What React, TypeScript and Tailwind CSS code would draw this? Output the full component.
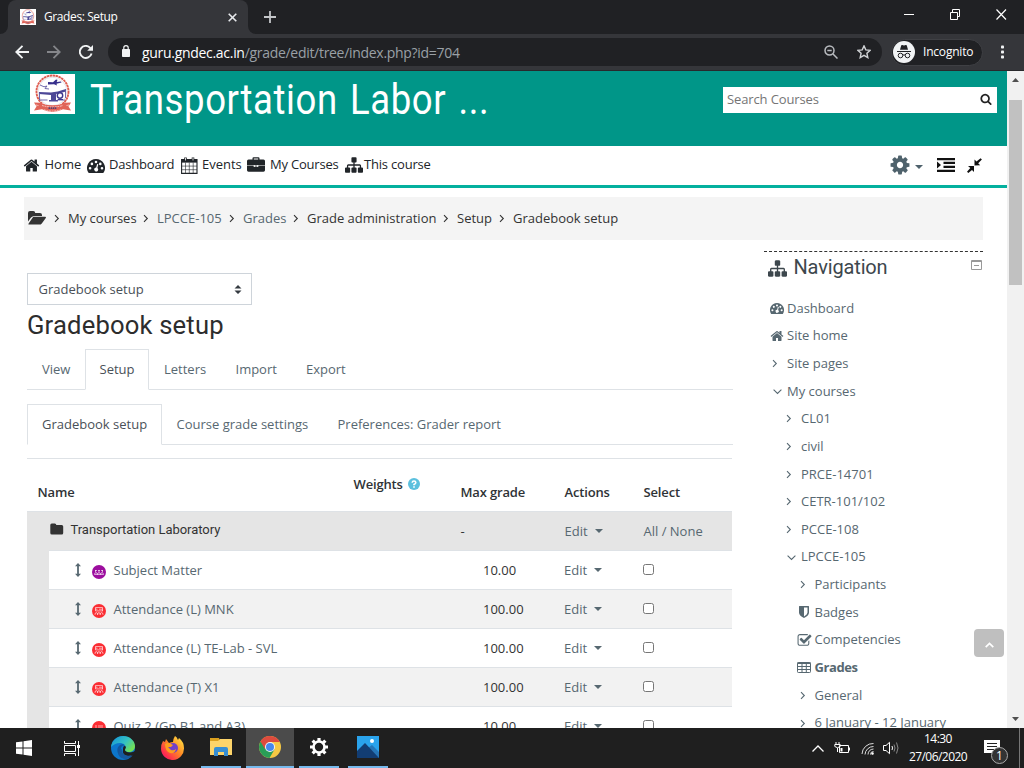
import React from "react";

type P = { c?: string };

const HOME = "M1472 992v480q0 26-19 45t-45 19h-384v-384h-256v384h-384q-26 0-45-19t-19-45v-480q0-1 .5-3t.5-3l575-474 575 474q1 2 1 6zm223-69l-62 74q-8 9-21 11h-3q-13 0-21-7l-692-577-692 577q-12 8-24 7-13-2-21-11l-62-74q-8-10-7-23.5t11-21.5l719-599q32-26 76-26t76 26l244 204v-195q0-14 9-23t23-9h192q14 0 23 9t9 23v408l219 182q10 8 11 21.5t-7 23.5z";
const SITEMAP = "M1792 1248v320q0 40-28 68t-68 28h-320q-40 0-68-28t-28-68v-320q0-40 28-68t68-28h96v-192h-512v192h96q40 0 68 28t28 68v320q0 40-28 68t-68 28h-320q-40 0-68-28t-28-68v-320q0-40 28-68t68-28h96v-192h-512v192h96q40 0 68 28t28 68v320q0 40-28 68t-68 28h-320q-40 0-68-28t-28-68v-320q0-40 28-68t68-28h96v-192q0-52 38-90t90-38h512v-192h-96q-40 0-68-28t-28-68v-320q0-40 28-68t68-28h320q40 0 68 28t28 68v320q0 40-28 68t-68 28h-96v192h512q52 0 90 38t38 90v192h96q40 0 68 28t28 68z";
const COG = "M1152 896q0-106-75-181t-181-75-181 75-75 181 75 181 181 75 181-75 75-181zm512-109v222q0 12-8 23t-20 13l-185 28q-19 54-39 91 35 50 107 138 10 12 10 25t-9 23q-27 37-99 108t-94 71q-12 0-26-9l-138-108q-44 23-91 38-16 136-29 186-7 28-36 28h-222q-14 0-24.5-8.5t-11.5-21.5l-28-184q-49-16-90-37l-141 107q-10 9-25 9-14 0-25-11-126-114-165-168-7-10-7-23 0-12 8-23 15-21 51-66.5t54-70.5q-27-50-41-99l-183-27q-13-2-21-12.5t-8-23.5v-222q0-12 8-23t19-13l186-28q14-46 39-92-40-57-107-138-10-12-10-24 0-10 9-23 26-36 98.5-107.5t94.5-71.5q13 0 26 10l138 107q44-23 91-38 16-136 29-186 7-28 36-28h222q14 0 24.5 8.5t11.5 21.5l28 184q49 16 90 37l142-107q9-9 24-9 13 0 25 10 129 119 165 170 7 8 7 22 0 12-8 23-15 21-51 66.5t-54 70.5q26 50 41 98l183 28q13 2 21 12.5t8 23.5z";
const CHECK = "M1472 930v318q0 119-84.5 203.5t-203.5 84.5h-832q-119 0-203.5-84.5t-84.5-203.5v-832q0-119 84.5-203.5t203.5-84.5h832q63 0 117 25 15 7 18 23 3 17-9 29l-49 49q-10 10-23 10-3 0-9-2-23-6-45-6h-832q-66 0-113 47t-47 113v832q0 66 47 113t113 47h832q66 0 113-47t47-113v-254q0-13 9-22l64-64q10-10 23-10 6 0 12 3 20 8 20 29zm231-489l-814 814q-24 24-57 24t-57-24l-430-430q-24-24-24-57t24-57l110-110q24-24 57-24t57 24l263 263 647-647q24-24 57-24t57 24l110 110q24 24 24 57t-24 57z";
const SEARCH = "M1216 832q0-185-131.5-316.5t-316.5-131.5-316.5 131.5-131.5 316.5 131.5 316.5 316.5 131.5 316.5-131.5 131.5-316.5zm512 832q0 52-38 90t-90 38q-54 0-90-38l-343-342q-179 124-399 124-143 0-273.5-55.5t-225-150-150-225-55.5-273.5 55.5-273.5 150-225 225-150 273.5-55.5 273.5 55.5 225 150 150 225 55.5 273.5q0 220-124 399l343 343q37 37 37 90z";

const Glyph = ({ d, c = "" }: { d: string; c?: string }) => (
  <svg viewBox="0 0 1792 1792" fill="currentColor" className={"shrink-0 " + c}><path d={d} /></svg>
);
const Gauge = ({ c = "" }: P) => (
  <svg viewBox="0 0 18 14" fill="currentColor" className={"shrink-0 " + c}>
    <path fillRule="evenodd" d="M9 0a9 9 0 0 1 7.700 13.600q-.2.4-.7.4H2q-.5 0-.7-.4A9 9 0 0 1 9 0zM3.100 8a1.300 1.300 0 1 0 0 2.600 1.300 1.300 0 0 0 0-2.600zM4.900 3.600a1.300 1.300 0 1 0 0 2.600 1.300 1.300 0 0 0 0-2.600zM9 1.700a1.300 1.300 0 1 0 0 2.600 1.300 1.300 0 0 0 0-2.600zM13.300 3.600a1.300 1.300 0 1 0 0 2.600 1.300 1.300 0 0 0 0-2.600zM15 8a1.300 1.300 0 1 0 0 2.600 1.300 1.300 0 0 0 0-2.600zM10.100 4.900 9.200 8.500a2 2 0 1 0 1.200.4L11.300 5.200z" />
  </svg>
);
const Calendar = ({ c = "" }: P) => (
  <svg viewBox="0 0 17 17" fill="none" stroke="currentColor" className={"shrink-0 " + c}>
    <path d="M.6 2.600H16v13.800H.6z" strokeWidth="1.100" />
    <path d="M.6 5.500H16M4.500 5.500v11M8.300 5.500v11M12.200 5.500v11M.6 9.100H16M.6 12.700H16" strokeWidth=".6" />
    <path d="M.6 3.800H16" strokeWidth="2.500" /><path d="M4.500.5v3.500M12 .5v3.500" strokeWidth="2.600" /><path d="M4.500 1v2.500M12 1v2.500" stroke="#fff" strokeWidth=".8" />
  </svg>
);
const Briefcase = ({ c = "" }: P) => (
  <svg viewBox="0 0 18 15" fill="currentColor" className={"shrink-0 " + c}>
    <path fillRule="evenodd" d="M5.500 2.500V1.200Q5.500.2 6.600.2h4.800q1.100 0 1.100 1v1.300h4q1.500 0 1.500 1.500v4H0V4q0-1.500 1.500-1.500zM6.800 2.500h4.400V1.400H6.800z" />
    <path d="M0 8.500h6.700v1.500h4.600V8.500H18v4.800q0 1.400-1.500 1.400h-15Q0 14.700 0 13.300z" /><path d="M7.800 8.600h2.400v.9H7.800z" />
  </svg>
);
const FolderOpen = ({ c = "" }: P) => (
  <svg viewBox="0 0 18 14" fill="currentColor" className={"shrink-0 " + c}>
    <path d="M0 10.800V2Q0 0 2 0h3.200q2 0 2 2H12q2 0 2 2v1H6.500Q4.300 5 3 6.600L0 10.500z" />
    <path d="M6.200 5.800h11q1.300.1.400 1.500l-3.800 5.100q-1 1.200-2.500 1.200H1Q-.1 13.500.8 12.300l3.400-5.100q.8-1.400 2-1.400z" />
  </svg>
);
const Chev = ({ c = "", dir = "r" }: P & { dir?: string }) => (
  <svg viewBox="0 0 9 9" fill="none" stroke="currentColor" strokeWidth="1.100" className={"shrink-0 " + c}>
    <path d={dir === "r" ? "M2 1.200 5.300 4.500 2 7.800" : "M.6 2.700 4.500 6.500 8.400 2.700"} />
  </svg>
);
const UpDown = () => (
  <svg viewBox="0 0 6 14" width="6" height="14" fill="currentColor" className="shrink-0"><path d="M3 0l3 3.200H3.900v7.600H6L3 14 0 10.800h2.100V3.200H0z" /></svg>
);
const Caret = ({ c = "" }: P) => <svg viewBox="0 0 8 4" width="8" height="4" fill="currentColor" className={"shrink-0 " + c}><path d="M0 0h8L4 4z" /></svg>;

const Emblem = ({ c = "" }: P) => (
  <svg viewBox="0 0 45 40" preserveAspectRatio="none" className={"shrink-0 bg-white " + c}>
    <circle cx="22.500" cy="17.500" r="16" fill="none" stroke="#df5c50" strokeWidth="1.900" strokeDasharray="2.500 .5" />
    <circle cx="22.500" cy="17.500" r="14.300" fill="none" stroke="#d5d0dc" strokeWidth=".6" />
    <path d="M9 18l12 .5q6-.5 15-3.500v2.500l-10 2.500v6h2v1.500h-9V26h2v-5l-12-1z" fill="#4d4897" />
    <path d="M18 8l5 .2 3-2.700 1.500.2-.8 2.300 4.300-.5.500 1-5 1.200.5 1.800-3-1.300-6 .2z" fill="#372f8c" />
    <path d="M10 11l4 1.800 3-.8-2 2.500 4 .5M9.500 19v7h8M35.500 16v8M27 26h8" fill="none" stroke="#625ba4" strokeWidth=".9" />
    <circle cx="30" cy="21.500" r="2.700" fill="#fff" stroke="#3d378f" strokeWidth="1.400" /><path d="M28 25.500h5" stroke="#3d378f" />
    <path d="M4 28.500l7 .3 2 1.500q9.500 2 19 0l2-1.500 7-.3-2.500 4 2.500 4-5-.8-3-.4q-10.500 5.500-21 0l-3 .4-5 .8 2.500-4z" fill="#e16458" />
    <path d="M6 31l3 .7M39 31l-3 .7M12 31.500q10.500 3 21 0M14 35.800q8 2.600 17 0" fill="none" stroke="#fbe0dd" strokeWidth=".8" strokeDasharray="1.800 .8" /><path d="M18.500 34.200h8" stroke="#57406f" strokeWidth="1.700" strokeDasharray="1.500 .6" />
  </svg>
);

const crumbs: [string, string][] = [["My courses", "w-[89px]"], ["LPCCE-105", "w-[86px] text-[#576871]"], ["Grades", "w-[64px] text-[#576871]"], ["Grade administration", "w-[150px]"], ["Setup", "w-[56px]"], ["Gradebook setup", "w-[120px]"]];

const items = [
  { n: "Subject Matter", g: "10.00", p: true },
  { n: "Attendance (L) MNK", g: "100.00" },
  { n: "Attendance (L) TE-Lab - SVL", g: "100.00" },
  { n: "Attendance (T) X1", g: "100.00" },
  { n: "Quiz 2 (Gp B1 and A3)", g: "10.00", quiz: true },
];

const ItemIcon = ({ p, quiz }: { p?: boolean; quiz?: boolean }) => (
  <svg viewBox="0 0 14 14" className="mt-[2px] size-[14px] shrink-0">
    <circle cx="7" cy="7" r="7" fill={p ? "#9c0e9e" : "#fb2d33"} />
    <g fill="none" stroke="#fff" strokeOpacity=".75" strokeWidth=".8">
      {p ? <path d="M2.500 9.500q.2-2 1.500-2t1.500 2q.2-2 1.500-2t1.500 2q.2-2 1.500-2t1.500 2M3 5.500h2m1 0h2m1 0h2M3.500 5v2m3.500-2v2m3.500-2v2M2.500 9.500h9" />
        : quiz ? <path d="M3 5h2M6 5h5M3 7h2M6 7h5M3 9h2M6 9h5" />
        : <path d="M3.500 3.500h7M3.500 5.200h2m1.500 0h3.500M3.500 6.900H11M3.500 3.500V7m7-3.500V7M3 10.800q0-2.300 1.300-2.300t1.300 2.300m0 0q0-2.300 1.300-2.300t1.300 2.300m0 0q0-2.300 1.400-2.300t1.400 2.300" />}
    </g>
  </svg>
);

const tree: { t: string; k: string; pad: string; b?: boolean }[] = [
  { t: "Dashboard", k: "gauge", pad: "pl-[6px]" },
  { t: "Site home", k: "home", pad: "pl-[6px]" },
  { t: "Site pages", k: "r", pad: "pl-[6px]" },
  { t: "My courses", k: "d", pad: "pl-[6px]" },
  { t: "CL01", k: "r", pad: "pl-5" },
  { t: "civil", k: "r", pad: "pl-5" },
  { t: "PRCE-14701", k: "r", pad: "pl-5" },
  { t: "CETR-101/102", k: "r", pad: "pl-5" },
  { t: "PCCE-108", k: "r", pad: "pl-5" },
  { t: "LPCCE-105", k: "d", pad: "pl-5" },
  { t: "Participants", k: "r", pad: "pl-[33.500px]" },
  { t: "Badges", k: "shield", pad: "pl-[33.500px]" },
  { t: "Competencies", k: "check", pad: "pl-[33.500px]" },
  { t: "Grades", k: "table", pad: "pl-[33.500px]", b: true },
  { t: "General", k: "r", pad: "pl-[33.500px]" },
  { t: "6 January - 12 January", k: "r", pad: "pl-[33.500px]" },
];

const TreeIcon = ({ k }: { k: string }) => {
  if (k === "gauge") return <Gauge c="h-[11px] w-[14px]" />;
  if (k === "home") return <Glyph d={HOME} c="size-[14px]" />;
  if (k === "check") return <Glyph d={CHECK} c="-ml-px size-[15px]" />;
  if (k === "shield") return <svg viewBox="0 0 10 12" className="ml-[1.500px] h-[12px] w-[10px]" fill="currentColor"><path fillRule="evenodd" d="M0 .5Q0 0 .5 0h9q.5 0 .5.500v6Q10 9.800 5 12 0 9.800 0 6.500zM5 1.500v8.900Q8.500 8.500 8.500 6.500v-5z" /></svg>;
  if (k === "table") return <svg viewBox="0 0 14 11" className="-ml-[.5px] h-[11px] w-[14px]" fill="none" stroke="currentColor"><rect x=".5" y=".5" width="13" height="10" rx=".8" /><path d="M.5 1.200h13" strokeWidth="1.600" /><path d="M.5 4.500h13M.5 7.500h13M5 1v9.500M9.300 1v9.500" /></svg>;
  return <Chev dir={k} c={k === "r" ? "ml-[1px] size-[9px]" : "ml-[3px] size-[9px]"} />;
};

function BrowserChrome() {
  return (
    <header className="h-[71px] bg-[#202124] font-['Open_Sans',sans-serif] text-white">
      <div className="flex h-[34px]">
        <div className="flex h-[34px] w-[8px] items-end bg-[#35363a]"><div className="h-full w-full rounded-br-[8px] bg-[#202124]" /></div>
        <div className="flex w-[240px] items-center rounded-t-[8px] bg-[#35363a] pl-3">
          <Emblem c="size-4" />
          <span className="ml-2 w-[184px] text-[12px] tracking-[-0.400px]">Grades: Setup</span>
          <svg width="9" height="9" viewBox="0 0 9 9" stroke="#e8eaed" strokeWidth="1.600"><path d="M.7.7l7.600 7.600M8.300.7.7 8.300" /></svg>
        </div>
        <div className="w-[8px] bg-[#35363a]"><div className="h-full w-full rounded-bl-[8px] bg-[#202124]" /></div>
        <svg className="mt-[11px] ml-[8px]" width="12" height="12" stroke="#c4c6c9" strokeWidth="1.800"><path d="M6 0v12M0 6h12" /></svg>
        <svg className="mt-[9px] ml-auto mr-[17px]" width="103" height="11" fill="none" stroke="#fff"><path d="M0 5.500h10" /><path d="M46.500 3.500h7v7h-7zM48.500 3.500v-3h7v7h-2" /><path d="M92.500.500l9.500 10M102 .5l-9.500 10" strokeWidth="1.200" /></svg>
      </div>
      <div className="flex h-[37px] items-center border-b border-[#28292c] bg-[#35363a]">
        <svg className="ml-[15px] shrink-0" width="14" height="14" fill="none" stroke="#f1f3f4" strokeWidth="1.900"><path d="M14 7H1.500M7.500.900 1.300 7l6.200 6.100" /></svg>
        <svg className="ml-[18px] shrink-0" width="14" height="14" fill="none" stroke="#85868a" strokeWidth="1.800"><path d="M0 7h12.500M6.500.900 12.700 7l-6.200 6.100" /></svg>
        <svg className="ml-[18px] shrink-0" width="14" height="14" fill="none" stroke="#f1f3f4" strokeWidth="1.900"><path d="M12.600 8.500A6 6 0 1 1 11.200 2.800L12.800 4.400" /><path d="M14 0v5.800H8.200z" fill="#f1f3f4" stroke="none" /></svg>
        <div className="ml-[15px] flex h-7 w-[774px] items-center rounded-full bg-[#202124]">
          <svg className="ml-[14px] -mt-[2px] shrink-0" width="8" height="12" viewBox="0 0 8 12"><rect y="4" width="8" height="8" rx=".8" fill="#f1f3f4" /><path d="M1.800 5V2.800a2.200 2.200 0 0 1 4.400 0V5" fill="none" stroke="#f1f3f4" strokeWidth="1.200" /></svg>
          <span className="ml-[12px] text-[14px] tracking-[-0.300px] whitespace-nowrap text-[#9aa0a6]"><span className="text-white">guru.gndec.ac.in</span>/grade/edit/tree/index.php?id=704</span>
          <svg className="ml-auto mr-[19px]" width="14" height="14" fill="none" stroke="#b9bcc0" strokeWidth="1.500"><circle cx="5.500" cy="5.500" r="4.500" /><path d="M9 9l4.500 4.500M3.300 5.500h4.400" /></svg>
          <svg className="mr-[11px]" width="14" height="14" viewBox="0 0 14 14" fill="none" stroke="#d0d2d5" strokeWidth="1.400"><path d="M7 .9l1.800 4 4.300.4-3.200 2.900.9 4.400L7 10.300l-3.800 2.300.9-4.400L.9 5.300l4.300-.4z" /></svg>
        </div>
        <div className="ml-[9px] flex h-[27px] w-[92px] items-center rounded-full border border-[#3f4044] bg-[#202124] pl-px">
          <svg width="22" height="22" viewBox="0 0 22 22" className="shrink-0"><circle cx="11" cy="11" r="11" fill="#f1f3f4" /><g fill="none" stroke="#202124"><path d="M4 10.500h14" /><circle cx="7.500" cy="14.500" r="2.300" /><circle cx="14.500" cy="14.500" r="2.300" /><path d="M9.800 14.200q1.200-.8 2.400 0" /></g><path d="M7 8.800 8.200 4.500q.3-.7 1-.4l1.800.5 1.800-.5q.7-.3 1 .4L15 8.800z" fill="#202124" /></svg>
          <span className="ml-[8px] text-[12px] tracking-[-0.200px]">Incognito</span>
        </div>
        <svg className="ml-[18px]" width="4" height="14" fill="#f1f3f4"><rect y=".5" width="3" height="3" rx=".8" /><rect y="5.500" width="3" height="3" rx=".8" /><rect y="10.500" width="3" height="3" rx=".8" /></svg>
      </div>
    </header>
  );
}

function Taskbar() {
  return (
    <footer className="flex h-10 items-stretch bg-[#1f1f1f] font-['Open_Sans',sans-serif] text-white">
      <div className="flex w-[48px] items-center justify-center"><svg width="16" height="16" fill="#fff"><path d="M0 2.300 6.500 1.400v6.100H0zM7.500 1.200 16 0v7.500H7.500zM0 8.500h6.500v6.100L0 13.700zM7.500 8.500H16V16l-8.500-1.200z" /></svg></div>
      <div className="flex w-[49px] items-center justify-center"><svg width="17" height="15" fill="none" stroke="#fff"><path d="M.500 0v2.500h11V0M.500 15v-2.500h11V15M.500 4.500h11v6H.500zM14.500 0v15" /><path d="M13 4h3v3h-3z" fill="#fff" stroke="none" /></svg></div>
      <div className="flex w-[52px] items-center justify-center">
        <svg width="24" height="24" viewBox="0 0 24 24"><defs><linearGradient id="eg" x1="0" x2="1" y1="0" y2=".6"><stop stopColor="#1292d8" /><stop offset=".6" stopColor="#34c1c3" /><stop offset="1" stopColor="#72e055" /></linearGradient></defs><circle cx="12" cy="12" r="12" fill="#0c76cb" /><path d="M0 11C1 4 6 0 12 0c7 0 12 5 12 10 0 4-3 6-6 6-3 0-5-1-4-3 2-4-2-6-5-6-4 0-7 2-9 4z" fill="url(#eg)" /><path d="M9 9c-3 2-4 7 0 11s9 3 12 0c-7 3-13-1-11-8 .5-2 2-3 4-2-1-2-3-2-5-1z" fill="#12569d" /><path d="M14 10c2 1 0 3 0 4 0 2 4 3 8 2l2-1v3l-3 2c-5 1-10-1-9-6 0-2 0-4 2-4z" fill="#1f1f1f" /><path d="M11 13c-1 5 4 8 10 6-3 4-8 5-12 2-3-3-1-7 2-8z" fill="#17599f" /></svg>
      </div>
      <div className="flex w-[48px] items-center justify-center">
        <svg width="24" height="24" viewBox="0 0 24 24"><defs><linearGradient id="fg" x1="1" y1="0" x2="0" y2="1"><stop stopColor="#fff34a" /><stop offset=".45" stopColor="#ff8a24" /><stop offset=".8" stopColor="#ff294f" /><stop offset="1" stopColor="#e51d9c" /></linearGradient></defs><path d="M2 5l2 1 1-3 3 4q2-1 4-1 0-3 2-6 2 1 3 4l1-2q5 4 5 10a11.500 11.500 0 0 1-23 1Q0 8 2 5z" fill="url(#fg)" /><circle cx="12" cy="12" r="5" fill="#7341c9" /><path d="M4 8q3-2 6 0l2 1-2 2-3 0 3 3q3 1 5-1-1 5-6 4-5-2-5-9z" fill="#ff9d1e" /></svg>
      </div>
      <div className="ml-1 flex w-10 items-center justify-center border-b-2 border-[#76b9ed]"><svg width="22" height="20" viewBox="0 0 22 20"><path d="M0 1h9l1 3H0z" fill="#dca11f" /><path d="M0 4h8l2-2h12v16H0z" fill="#fdd46a" /><path d="M4 19v-7q0-2 2-2h10q2 0 2 2v7h-4v-4H8v4z" fill="#378ed3" /></svg></div>
      <div className="ml-[5px] flex w-12 items-center justify-center border-b-2 border-[#76b9ed] bg-[#4b4b4b]"><svg width="22" height="22" viewBox="0 0 22 22"><circle cx="11" cy="11" r="11" fill="#f6c844" /><path d="M11 11 1.500 5.500A11 11 0 0 0 10.500 22l5-8.500z" fill="#299e57" /><path d="M11 6h9.800A11 11 0 0 0 1.500 5.500L6 13z" fill="#dd4b3e" /><circle cx="11" cy="11" r="5" fill="#f4f4f4" /><circle cx="11" cy="11" r="4" fill="#4688ee" /></svg></div>
      <div className="ml-[5px] flex w-10 items-center justify-center border-b-2 border-[#76b9ed]"><svg width="20" height="20" viewBox="-10 -10 20 20" fill="none" stroke="#fff"><circle r="5.500" strokeWidth="2.600" /><path d="M0-6v-3M0 6v3M6 0h3M-6 0h-3M4.300 4.300l2.100 2.100M-4.300-4.300l-2.100-2.100M4.300-4.300l2.100-2.100M-4.300 4.300l-2.100 2.100" strokeWidth="3.200" /></svg></div>
      <div className="ml-[9px] flex w-10 items-center justify-center border-b-2 border-[#76b9ed]"><svg width="22" height="22"><rect width="22" height="22" fill="#2aa3ec" /><path d="M11 12l4-3 7 7v6H11z" fill="#2676b8" /><path d="M0 15l8-8 14 15H0z" fill="#123d73" /><circle cx="15" cy="5" r="2" fill="#fff" /></svg></div>
      <div className="ml-auto flex items-center">
        <svg width="12" height="7" fill="none" stroke="#fff" strokeWidth="1.300"><path d="M.500 6.500 6 1l5.500 5.500" /></svg>
        <svg className="ml-[10px]" width="17" height="12" fill="none" stroke="#fff"><path d="M2 0v2M5 0v2M.8 2.500h5.400v2q-2.700 2.500-5.400 0zM3.500 6v4" /><path d="M5.500 3.500h9v7h-9zM15.500 5.500v3" /><path d="M6.500 6h2v3.500h-2z" fill="#fff" stroke="none" /></svg>
        <svg className="ml-[10px]" width="13" height="13" fill="none" stroke="#ddd"><path d="M1 12A11 11 0 0 1 12.500 1.500M4 12.500A8.500 8.500 0 0 1 12.500 4.500M7 12.500a6 6 0 0 1 5.500-5.500M9.500 12.500a3 3 0 0 1 3-3" /><circle cx="11.500" cy="11.500" r="1" fill="#fff" /></svg>
        <svg className="ml-[9px]" width="17" height="14" fill="none" stroke="#fff"><path d="M.500 4.500H3L6.500 1.300v11.400L3 9.500H.500zM9 5q1 2 0 4" /><path d="M11 3.500q2 3.500 0 7M13.500 1.500q3 5.500 0 11" stroke="#888" /></svg>
        <div className="ml-[6px] flex w-[64px] flex-col items-center text-[12px] leading-[18px] tracking-[-0.550px]"><span>14:30</span><span>27/06/2020</span></div>
        <div className="relative ml-[13px] h-[28px] w-[26px]">
          <svg width="24" height="28"><path d="M1 6h16v13h-4v3l-4-3H1z" fill="#fff" /><path d="M4 9.500h10M4 12.500h10M4 15.500h7" stroke="#222" /></svg>
          <span className="absolute top-[13px] left-[8px] flex size-[17px] items-center justify-center rounded-full border border-[#aaa] bg-[#333] text-[12px] leading-none">1</span>
        </div>
        <div className="ml-[10px] h-10 w-[5px] border-l border-[#777]" />
      </div>
    </footer>
  );
}

function Gradebook() {
  const nav = "flex h-[41px] items-center border px-[14px] whitespace-nowrap ";
  return (
    <main className="w-[706px] shrink-0 pt-[33px]">
      <div className="flex h-8 w-[225px] items-center justify-between border border-[#ced4da] pt-px pr-[9px] pl-[10.500px] text-[#495057]">
        <span>Gradebook setup</span>
        <svg width="8" height="9" fill="#343a40"><path d="M4 0l3.500 3.500h-7zM4 9l3.500-3.500h-7z" /></svg>
      </div>
      <h2 className="h-[44px] font-['Roboto',sans-serif] text-[25.600px] leading-[41px] tracking-[0.180px] text-[#2d2d2d]">Gradebook setup</h2>
      <div className="flex h-[41px] border-b border-[#dee2e6] text-[#576871]">
        <span className={nav + "w-[58px] border-transparent"}>View</span>
        <span className={nav + "w-[64px] border-[#dee2e6] border-b-white bg-white text-[#495057]"}><span className="-ml-[.5px]">Setup</span></span>
        <span className={nav + "w-[72px] border-transparent"}>Letters</span>
        <span className={nav + "w-[70px] border-transparent"}><span className="-ml-[.5px]">Import</span></span>
        <span className={nav + "border-transparent"}>Export</span>
      </div>
      <div className="mt-[14px] flex h-[41px] border-b border-[#dee2e6] text-[#576871]">
        <span className={nav + "w-[135px] border-[#dee2e6] border-b-white text-[#495057]"}>Gradebook setup</span>
        <span className={nav + "w-[160px] border-transparent"}><span className="-ml-[.5px]">Course grade settings</span></span>
        <span className={nav + "border-transparent"}><span className="ml-[.5px]">Preferences: Grader report</span></span>
      </div>
      <div className="mt-[13px] w-[705px] border-t border-[#dee2e6]">
        <div className="flex h-[52px] items-center pt-[15px] pl-[10.500px] font-semibold tracking-[-0.150px] text-[#2f3336]">
          <span className="w-[316px]">Name</span>
          <span className="-mt-4 flex w-[107px] items-center gap-[5px]">Weights
            <svg className="-mt-px" width="12" height="12"><circle cx="6" cy="6" r="6" fill="#5bc0de" /><path d="M4.200 4.700Q4.300 3 6 3t1.800 1.500Q7.800 5.700 6 6.500v.7M6 8.200v1.500" fill="none" stroke="#fff" strokeWidth="1.600" /></svg>
          </span>
          <span className="w-[104px]">Max grade</span><span className="w-[79px]">Actions</span><span>Select</span>
        </div>
        <div className="flex h-[39px] items-center border-t border-[#dee2e6] bg-[#e5e5e5] pt-px pl-[22.500px] text-[#576871]">
          <svg className="-mt-[5px]" width="14" height="12" fill="#333"><path d="M.300 10V2Q.300.500 1.800.500h3q1.500 0 1.500 1.500h5.400q1.500 0 1.500 1.500V10q0 1.500-1.500 1.500H1.800Q.300 11.500.300 10z" /></svg>
          <span className="ml-[7px] -mt-[4px] w-[390px] font-['Roboto',sans-serif] text-[13px] tracking-[-0.030px] text-[#333]">Transportation Laboratory</span>
          <span className="w-[104px] text-[#333]">-</span>
          <span className="flex w-[79px] items-center gap-[7px]">Edit<Caret c="-mt-px" /></span>
          <span>All / None</span>
        </div>
        <div className="h-[178px] overflow-hidden bg-[#e5e5e5] pl-[22px]">
          {items.map((it, i) => (
            <div key={it.n} className={"flex h-[39px] items-center border-t border-[#dee2e6] pt-px pl-[26px] text-[#576871] " + (i % 2 ? "bg-[#f2f2f2]" : "bg-white")}>
              <span className="-mt-px flex"><UpDown /></span>
              <div className="ml-[11px] flex w-[391px] items-center gap-[7.500px]"><ItemIcon p={it.p} quiz={it.quiz} /><span>{it.n}</span></div>
              <span className="w-[81px] text-[#333]">{it.g}</span>
              <span className="flex w-[79px] items-center gap-[7px]">Edit<Caret c="-mt-px" /></span>
              <span className="-mt-[3px] size-[11px] rounded-[2.500px] border border-[#777] bg-white" />
            </div>
          ))}
        </div>
      </div>
    </main>
  );
}

export default function App() {
  return (
    <div className="flex h-[768px] w-[1024px] flex-col overflow-hidden bg-white">
      <BrowserChrome />
      <div className="relative flex h-[657px] shrink-0 font-['Open_Sans',sans-serif] text-[13px]">
        <div className="h-full w-[1007px] overflow-hidden">
          <div className="flex h-[75px] items-start bg-[#009688]">
            <Emblem c="mt-[3px] ml-[30px] h-10 w-[45px]" />
            <h1 className="ml-[14.500px] w-[633.500px] origin-left scale-x-[0.850] font-['Roboto',sans-serif] text-[43px] leading-[57px] font-[450] tracking-[0.700px] [word-spacing:3px] whitespace-nowrap text-white">Transportation Labor ...</h1>
            <div className="mt-4 flex h-[26px] w-[274px] items-center justify-between bg-white pr-[5px] pl-[4px] text-[13px] tracking-[-0.130px] text-[#757575]"><span>Search Courses</span><Glyph d={SEARCH} c="-mt-[2px] size-[12px] text-[#222]" /></div>
          </div>
          <nav className="flex h-[42px] items-center border-b-[3px] border-[#04b09e] pb-px pl-[23px] text-[#212529]">
            <Glyph d={HOME} c="size-[17px]" /><span className="ml-[4.500px] w-[42.500px]">Home</span>
            <Gauge c="h-[14px] w-[18px] mt-[2px]" /><span className="ml-[4px] w-[72px] tracking-[-0.200px]">Dashboard</span>
            <Calendar c="size-[17px]" /><span className="ml-[4px] w-[45px]">Events</span>
            <Briefcase c="h-[15px] w-[18px] mb-[2px]" /><span className="ml-[5px] w-[75px] tracking-[-0.200px]">My Courses</span>
            <Glyph d={SITEMAP} c="size-[18px]" /><span className="ml-px tracking-[-0.200px]">This course</span>
            <Glyph d={COG} c="ml-auto size-[22px] -mt-px text-[#4f626c]" /><Caret c="ml-[4px] mt-1 text-[#4f626c]" />
            <svg className="ml-[14px] shrink-0" width="18" height="14" fill="#111"><path d="M0 0h18v2.300H0zM6.500 3.800H18v2.300H6.500zM6.500 7.800H18v2.300H6.500zM0 11.700h18V14H0zM0 3.500l4 3.500-4 3.500z" /></svg>
            <svg className="mr-[25px] ml-[12px] shrink-0" width="15" height="15" fill="#111"><path d="M7.500 7.500V1.500l2 2L13.600.2l1.300 1.300-3.700 3.700 2 2zM7 8v6l-2-2-3.700 3L0 13.700 3.300 10 1 8z" /></svg>
          </nav>
          <div className="mt-[9px] ml-6 flex h-[43px] w-[959px] items-center bg-[#f4f4f4] pl-[4px] text-[#333]">
            <FolderOpen c="-mt-[2px] h-[14px] w-[18px]" />
            <Chev c="mr-[8px] ml-[7px] size-[9px]" />
            {crumbs.map(([t, w], i) => <span key={t} className={"flex shrink-0 items-center whitespace-nowrap " + w}><span className="-ml-[2px]">{t}</span>{i < 5 && <Chev c="mr-[8px] ml-auto size-[9px] text-[#333]" />}</span>)}
          </div>
          <div className="flex pl-[27px]">
            <Gradebook />
            <aside className="ml-[31px] w-[219px] shrink-0 pt-[11px]">
              <div className="flex h-[33px] items-center border-t border-dashed border-[#333] pb-[2px] pl-[4px] text-[#3d474d]">
                <Glyph d={SITEMAP} c="size-[19px] mt-[2px]" />
                <h3 className="ml-[6.500px] font-['Roboto',sans-serif] text-[20px] tracking-[-0.150px]">Navigation</h3>
                <svg className="-mt-1 ml-auto mr-px" width="11" height="10" fill="none" stroke="#999"><path d="M.500.500h10v9H.500zM0 1.500h11M3 5.500h5" /></svg>
              </div>
              <ul className="pt-[10.600px] text-[#576871]">
                {tree.map((n) => (
                  <li key={n.t} className={"flex h-[27.650px] items-center whitespace-nowrap " + n.pad}>
                    <span className="flex w-[17px] shrink-0 items-center"><TreeIcon k={n.k} /></span>
                    <span className={n.b ? "font-bold tracking-[-0.400px]" : ""}>{n.t}</span>
                  </li>
                ))}
              </ul>
            </aside>
          </div>
        </div>
        <div className="flex h-full w-[17px] flex-col items-center justify-between bg-[#f1f1f1] py-[7px]">
          <div className="flex flex-col items-center"><svg width="7" height="4" fill="#505050"><path d="M0 4h7L3.500 0z" /></svg><div className="mt-[18px] h-[185px] w-[13px] bg-[#c1c1c1]" /></div>
          <svg width="7" height="4" fill="#505050"><path d="M0 0h7L3.500 4z" /></svg>
        </div>
        <button className="absolute top-[558px] left-[974px] flex h-7 w-[30px] items-center justify-center rounded-[4px] bg-[#bfbfbf] pt-1">
          <svg width="9" height="6" fill="none" stroke="#fff" strokeWidth="1.700"><path d="M.700 5.200 4.500 1.400l3.800 3.800" /></svg>
        </button>
      </div>
      <Taskbar />
    </div>
  );
}
